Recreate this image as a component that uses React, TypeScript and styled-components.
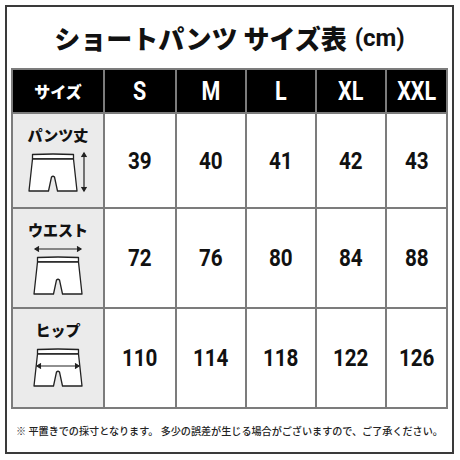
import React from 'react';
import styled, { createGlobalStyle } from 'styled-components';

const GlobalStyle = createGlobalStyle`
  html, body {
    margin: 0;
    padding: 0;
    background: #ffffff;
  }
`;

const jp = `"Noto Sans CJK JP", "Noto Sans", sans-serif`;

const Frame = styled.div`
  box-sizing: border-box;
  width: 449px;
  height: 449px;
  margin: 5px 0 0 5px;
  border: 2px solid #3a3a3a;
  padding: 0 4px;
  display: flex;
  flex-direction: column;
  font-family: ${jp};
  color: #111;
`;

const Title = styled.h1`
  margin: 0;
  height: 61px;
  display: flex;
  align-items: center;
  justify-content: center;
  font-size: 26px;
  font-weight: 900;
  white-space: nowrap;
`;

const Unit = styled.span`
  font-family: "Roboto", sans-serif;
  font-weight: 700;
  font-size: 24px;
  margin-left: 8px;
`;

const Table = styled.div`
  display: grid;
  grid-template-columns: 90px 70px 68px 68px 68px 59px;
  grid-template-rows: 42px 93px 98px 98px;
  gap: 2px;
  padding: 2px;
  background: #7c7c7c;
`;

const HeadCell = styled.div`
  background: #000;
  color: #fff;
  display: flex;
  align-items: center;
  justify-content: center;
`;

const HeadLabel = styled.span`
  font-family: ${jp};
  font-weight: 900;
  font-size: 16px;
`;

const Condensed = styled.span<{ $size: number }>`
  display: inline-block;
  font-family: "Roboto", sans-serif;
  font-weight: 700;
  font-size: ${p => p.$size}px;
  transform: scaleX(0.86);
`;

const LabelCell = styled.div`
  background: #ebebeb;
  display: flex;
  flex-direction: column;
  align-items: center;
  padding-top: 12px;
  gap: 7px;
`;

const LabelText = styled.div`
  font-weight: 900;
  font-size: 15px;
  line-height: 18px;
`;

const ValueCell = styled.div`
  background: #fff;
  color: #111;
  display: flex;
  align-items: center;
  justify-content: center;
`;

const Footer = styled.div`
  flex: 1;
  display: flex;
  align-items: center;
  justify-content: center;
  font-size: 10.1px;
  font-weight: 500;
  white-space: nowrap;
  color: #222;
`;

type Kind = 'length' | 'waist' | 'hip';

const Shorts = ({ x, y }: { x: number; y: number }) => (
  <g transform={`translate(${x} ${y})`} fill="#fff" stroke="#222" strokeWidth="1.3" strokeLinejoin="round">
    <path d="M3.5 1.5 Q24 0.5 44.5 1.5 L44.5 6 L3.5 6 Z" />
    <path d="M3.5 6 L44.5 6 L48 38 L28.5 38 L25.5 24 Q24 22.5 22.5 24 L19.5 38 L0 38 Z" />
  </g>
);

const Arrow = ({ x1, y1, x2, y2 }: { x1: number; y1: number; x2: number; y2: number }) => {
  const vertical = x1 === x2;
  const h = vertical
    ? `M${x1 - 2.5} ${y1 + 4} L${x1} ${y1} L${x1 + 2.5} ${y1 + 4} M${x2 - 2.5} ${y2 - 4} L${x2} ${y2} L${x2 + 2.5} ${y2 - 4}`
    : `M${x1 + 4} ${y1 - 2.5} L${x1} ${y1} L${x1 + 4} ${y1 + 2.5} M${x2 - 4} ${y2 - 2.5} L${x2} ${y2} L${x2 - 4} ${y2 + 2.5}`;
  return (
    <g stroke="#222" strokeWidth="1.2" fill="none">
      <line x1={x1} y1={y1} x2={x2} y2={y2} />
      <path d={h} fill="#222" />
    </g>
  );
};

function MeasureIcon({ kind }: { kind: Kind }) {
  if (kind === 'length') {
    return (
      <svg width="60" height="42" viewBox="0 0 60 42">
        <Shorts x={1} y={2} />
        <Arrow x1={56} y1={2} x2={56} y2={40} />
      </svg>
    );
  }
  if (kind === 'waist') {
    return (
      <svg width="52" height="50" viewBox="0 0 52 50">
        <Arrow x1={3} y1={3} x2={49} y2={3} />
        <Shorts x={2} y={10} />
      </svg>
    );
  }
  return (
    <svg width="52" height="42" viewBox="0 0 52 42">
      <Shorts x={2} y={2} />
      <Arrow x1={5} y1={20} x2={47} y2={20} />
    </svg>
  );
}

const sizes = ['S', 'M', 'L', 'XL', 'XXL'];

const rows: { label: string; kind: Kind; values: number[] }[] = [
  { label: 'パンツ丈', kind: 'length', values: [39, 40, 41, 42, 43] },
  { label: 'ウエスト', kind: 'waist', values: [72, 76, 80, 84, 88] },
  { label: 'ヒップ', kind: 'hip', values: [110, 114, 118, 122, 126] },
];

export default function App() {
  return (
    <>
      <GlobalStyle />
      <Frame>
        <Title>
          ショートパンツ サイズ表<Unit>(cm)</Unit>
        </Title>
        <Table>
          <HeadCell>
            <HeadLabel>サイズ</HeadLabel>
          </HeadCell>
          {sizes.map(s => (
            <HeadCell key={s}>
              <Condensed $size={25}>{s}</Condensed>
            </HeadCell>
          ))}
          {rows.map(r => (
            <React.Fragment key={r.label}>
              <LabelCell>
                <LabelText>{r.label}</LabelText>
                <MeasureIcon kind={r.kind} />
              </LabelCell>
              {r.values.map(v => (
                <ValueCell key={v}>
                  <Condensed $size={24}>{v}</Condensed>
                </ValueCell>
              ))}
            </React.Fragment>
          ))}
        </Table>
        <Footer>※ 平置きでの採寸となります。 多少の誤差が生じる場合がございますので、ご了承ください。</Footer>
      </Frame>
    </>
  );
}
